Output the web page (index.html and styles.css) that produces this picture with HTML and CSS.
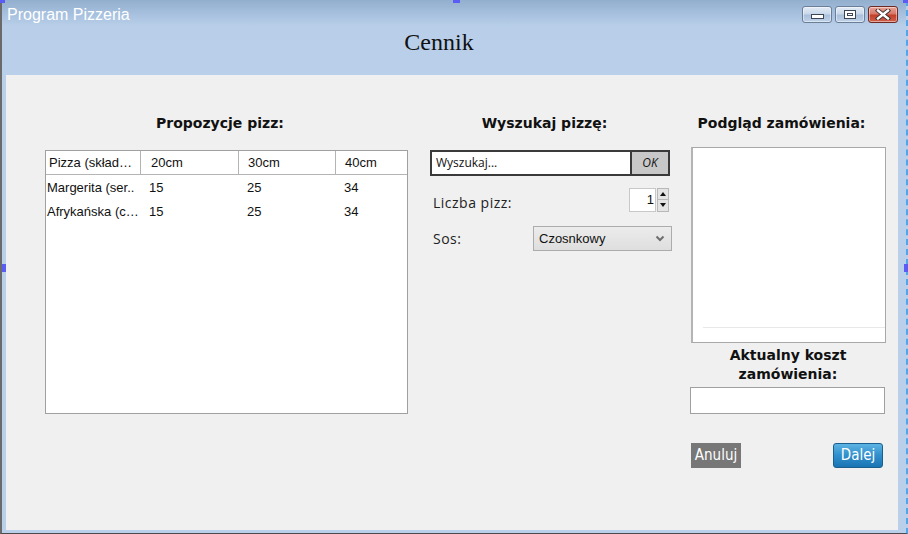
FILE: index.html
```html
<!DOCTYPE html>
<html lang="pl">
<head>
<meta charset="utf-8">
<title>Program Pizzeria</title>
<link rel="stylesheet" href="styles.css">
</head>
<body>
<div class="window">
  <span class="handle h-tl"></span>
  <span class="handle h-tc"></span>
  <span class="handle h-tr"></span>
  <span class="handle h-ml"></span>
  <span class="handle h-mr"></span>
  <header class="titlebar">
    <div class="title-row">
      <div class="app-title">Program Pizzeria</div>
      <div class="win-buttons">
        <div class="wbtn"><span class="ico-min"></span></div>
        <div class="wbtn"><span class="ico-max"></span></div>
        <div class="wbtn close">
          <svg width="16" height="11" viewBox="0 0 16 11"><path d="M3 1.5 L13 9.5 M13 1.5 L3 9.5" stroke="#3a2a2a" stroke-width="4.2" stroke-linecap="square"/><path d="M3 1.5 L13 9.5 M13 1.5 L3 9.5" stroke="#ffffff" stroke-width="2.4" stroke-linecap="square"/></svg>
        </div>
      </div>
    </div>
    <h1 class="page-title">Cennik</h1>
  </header>
  <main class="panel">
    <section class="col col-menu">
      <h2 class="heading">Propozycje pizz:</h2>
      <div class="table">
        <div class="trow thead">
          <div class="cell c1">Pizza (skład…</div>
          <div class="cell c2">20cm</div>
          <div class="cell c3">30cm</div>
          <div class="cell c4">40cm</div>
        </div>
        <div class="trow">
          <div class="cell c1">Margerita (ser..</div>
          <div class="cell c2">15</div>
          <div class="cell c3">25</div>
          <div class="cell c4">34</div>
        </div>
        <div class="trow">
          <div class="cell c1">Afrykańska (c…</div>
          <div class="cell c2">15</div>
          <div class="cell c3">25</div>
          <div class="cell c4">34</div>
        </div>
      </div>
    </section>
    <section class="col col-search">
      <h2 class="heading">Wyszukaj pizzę:</h2>
      <div class="search">
        <div class="search-input">Wyszukaj...</div>
        <div class="search-ok">OK</div>
      </div>
      <div class="form-row qty-row">
        <span class="label">Liczba pizz:</span>
        <div class="spinner">
          <div class="spin-field">1</div>
          <div class="spin-arrows">
            <div class="arrow up"></div>
            <div class="arrow down"></div>
          </div>
        </div>
      </div>
      <div class="form-row sauce-row">
        <span class="label">Sos:</span>
        <div class="select">
          <span>Czosnkowy</span>
          <svg width="10" height="7" viewBox="0 0 10 7"><path d="M1.5 1.5 L5 5 L8.5 1.5" fill="none" stroke="#6e6e6e" stroke-width="2"/></svg>
        </div>
      </div>
    </section>
    <section class="col col-order">
      <h2 class="heading">Podgląd zamówienia:</h2>
      <div class="preview"><div class="preview-line"></div></div>
      <div class="cost-label">Aktualny koszt<br>zamówienia:</div>
      <div class="cost-field"></div>
      <div class="actions">
        <div class="btn-cancel">Anuluj</div>
        <div class="btn-next">Dalej</div>
      </div>
    </section>
  </main>
</div>
</body>
</html>
```
FILE: styles.css
```css
* { box-sizing: border-box; margin: 0; padding: 0; }
html, body { width: 908px; height: 534px; overflow: hidden; }
body { background: #ffffff; font-family: "Liberation Sans", Arial, sans-serif; }

.window {
  position: relative;
  width: 908px;
  height: 534px;
  background: #bad0ea;
  border-left: 2px solid #6a6a6a;
  border-bottom: 1px solid #4a4a4a;
  border-right: 2px dashed #4aa8f0;
  display: flex;
  flex-direction: column;
}

.handle { position: absolute; background: #5b5bf5; }
.h-tl { left: -2px; top: 0; width: 5px; height: 3px; }
.h-tc { left: 451px; top: 0; width: 7px; height: 3px; }
.h-tr { right: -2px; top: 0; width: 5px; height: 3px; }
.h-ml { left: 0; top: 264px; width: 4px; height: 8px; }
.h-mr { right: -2px; top: 264px; width: 4px; height: 8px; }

.titlebar {
  height: 75px;
  background: linear-gradient(to bottom, #93afce 0px, #a6c0de 14px, #b9cfe9 26px, #bad0ea 75px);
}
.title-row {
  height: 28px;
  display: flex;
  justify-content: space-between;
  align-items: flex-start;
  padding: 0 8px 0 5px;
}
.app-title {
  color: #ffffff;
  font-size: 16px;
  line-height: 28px;
  margin-top: 1px;
}
.win-buttons { display: flex; gap: 3px; padding-top: 6px; }
.wbtn {
  width: 30px;
  height: 17px;
  border: 1px solid #6a7e98;
  border-radius: 3px;
  background: linear-gradient(to bottom, #e4ecf6 0%, #c9d8ea 45%, #a9c0dc 55%, #bfd2e8 100%);
  display: flex;
  align-items: center;
  justify-content: center;
  box-shadow: inset 0 0 0 1px rgba(255,255,255,0.45);
}
.wbtn.close {
  border-color: #6e2a22;
  background: linear-gradient(to bottom, #e7a597 0%, #d7786a 45%, #c2402a 55%, #d0604c 100%);
}
.ico-min {
  width: 13px;
  height: 5px;
  margin-top: 4px;
  background: #ffffff;
  border: 1px solid #3b4554;
}
.ico-max {
  width: 12px;
  height: 9px;
  border: 1px solid #3b4554;
  background: #ffffff;
  box-shadow: inset 0 0 0 2px #ffffff, inset 0 0 0 3px #3b4554;
}

.page-title {
  font-family: "Liberation Serif", "Times New Roman", serif;
  font-weight: normal;
  font-size: 24px;
  line-height: 28px;
  text-align: center;
  color: #111111;
  padding-right: 30px;
}

.panel {
  flex: 1;
  margin: 0 8px 3px 4px;
  background: #f0f0f0;
  display: flex;
  align-items: flex-start;
  padding: 40px 0 0 39px;
}

.col { display: flex; flex-direction: column; }
.col-menu { width: 363px; }
.col-search { width: 242px; margin-left: 22px; }
.col-order { width: 196px; margin-left: 18px; }

.heading {
  font-family: "DejaVu Sans", Verdana, sans-serif;
  font-weight: bold;
  font-size: 14px;
  line-height: 16px;
  color: #111111;
  text-align: center;
  padding-right: 13px;
}

.table {
  margin-top: 19px;
  height: 264px;
  background: #ffffff;
  border: 1px solid #a0a0a0;
  font-size: 13px;
  color: #111111;
}
.trow { display: flex; height: 24px; align-items: center; }
.thead { border-bottom: 1px solid #b4b4b4; }
.cell { white-space: nowrap; overflow: hidden; }
.c1 { width: 94px; padding-left: 1px; }
.c2 { width: 98px; padding-left: 9px; }
.c3 { width: 97px; padding-left: 9px; }
.c4 { flex: 1; padding-left: 9px; }
.thead .cell { height: 23px; line-height: 23px; }
.thead .c1 { padding-left: 3px; }
.thead .c2 { padding-left: 10px; }
.thead .c2, .thead .c3, .thead .c4 { border-left: 1px solid #b4b4b4; }
.thead .c3, .thead .c4 { padding-left: 9px; }

.search { margin-top: 19px; display: flex; height: 26px; width: 240px; }
.search-input {
  flex: 1;
  background: #ffffff;
  border: 2px solid #3a3a3a;
  border-right: 1px solid #3a3a3a;
  font-family: "Open Sans", sans-serif;
  font-size: 12px;
  line-height: 22px;
  padding-left: 4px;
  color: #111;
}
.search-ok {
  width: 39px;
  background: #c8c8c8;
  border: 2px solid #3a3a3a;
  border-left: 1px solid #3a3a3a;
  font-family: "Open Sans", sans-serif;
  font-size: 12px;
  font-style: italic;
  line-height: 22px;
  text-align: center;
  color: #111;
}

.form-row { display: flex; align-items: center; justify-content: space-between; }
.qty-row { margin-top: 11px; padding-left: 3px; width: 239px; }
.sauce-row { margin-top: 14px; padding-left: 3px; }
.label {
  font-family: "Open Sans", sans-serif;
  font-size: 14px;
  letter-spacing: 0.5px;
  color: #222;
}
.qty-row .label { margin-top: 6px; }
.spinner { display: flex; height: 24px; }
.spin-field {
  width: 27px;
  background: #ffffff;
  border: 1px solid #c8c8c8;
  font-size: 13px;
  line-height: 22px;
  text-align: right;
  padding-right: 1px;
  color: #111;
}
.spin-arrows { display: flex; flex-direction: column; width: 12px; margin-left: 1px; }
.arrow {
  flex: 1;
  background: #e4e4e4;
  border: 1px solid #b8b8b8;
  position: relative;
}
.arrow.up { border-bottom: none; }
.arrow::after {
  content: "";
  position: absolute;
  left: 2px;
  top: 3px;
  border-left: 3px solid transparent;
  border-right: 3px solid transparent;
}
.arrow.up::after { border-bottom: 4px solid #111; }
.arrow.down::after { border-top: 4px solid #111; top: 3px; }

.select {
  width: 139px;
  height: 25px;
  border: 1px solid #acacac;
  background: linear-gradient(to bottom, #ececec, #dedede);
  display: flex;
  align-items: center;
  justify-content: space-between;
  padding: 0 6px 0 5px;
  font-size: 13px;
  color: #111;
}

.preview {
  margin-top: 16px;
  margin-left: 1px;
  height: 196px;
  background: #ffffff;
  border: 1px solid #a8a8a8;
  border-left: 2px solid #b4b4b4;
  position: relative;
}
.preview-line {
  position: absolute;
  left: 10px;
  right: 0;
  bottom: 14px;
  height: 1px;
  background: #e8e8e8;
}
.cost-label {
  margin-top: 3px;
  font-family: "DejaVu Sans", Verdana, sans-serif;
  font-weight: bold;
  font-size: 14px;
  line-height: 19px;
  text-align: center;
  color: #111;
}
.cost-field {
  margin-top: 3px;
  height: 27px;
  width: 195px;
  background: #ffffff;
  border: 1px solid #a0a0a0;
}
.actions {
  margin-top: 29px;
  display: flex;
  justify-content: space-between;
  padding: 0 3px 0 1px;
}
.btn-cancel {
  width: 50px;
  height: 25px;
  background: #777777;
  color: #ffffff;
  font-family: "DejaVu Sans Condensed", "DejaVu Sans", sans-serif;
  font-stretch: condensed;
  font-size: 15px;
  line-height: 25px;
  text-align: center;
}
.btn-next {
  width: 50px;
  height: 25px;
  border: 1px solid #19608f;
  border-radius: 3px;
  background: linear-gradient(to bottom, #5db3e3 0%, #2f8fcc 50%, #1a74b3 100%);
  color: #ffffff;
  font-family: "DejaVu Sans Condensed", "DejaVu Sans", sans-serif;
  font-stretch: condensed;
  font-size: 15px;
  line-height: 23px;
  text-align: center;
}
```
